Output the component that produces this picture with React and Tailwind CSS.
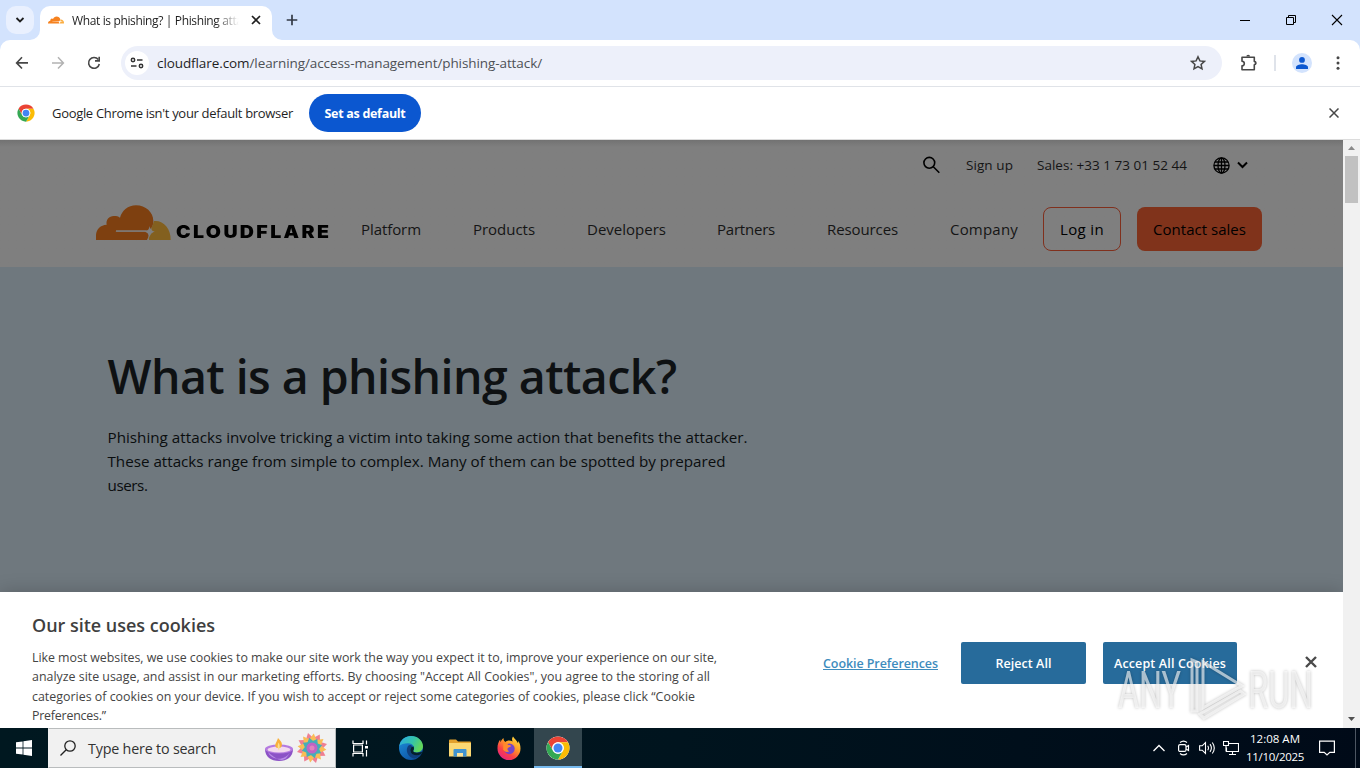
import { useLayoutEffect, useRef, useState } from "react";

/* One line of text, tracked so that it spans exactly `w` pixels. */
function Line({ w, className = "", children }) {
  const ref = useRef(null);
  const [spacing, setSpacing] = useState(0);
  useLayoutEffect(() => {
    const box = ref.current.parentElement;
    const scale = box.getBoundingClientRect().width / box.offsetWidth || 1;
    const natural = ref.current.getBoundingClientRect().width / scale;
    const count = ref.current.textContent.length;
    setSpacing((box.offsetWidth - natural) / count);
  }, [w]);
  return (
    <span className={`block shrink-0 whitespace-nowrap ${className}`} style={{ width: w }}>
      <span ref={ref} style={{ letterSpacing: spacing }}>
        {children}
      </span>
    </span>
  );
}

function Favicon() {
  return (
    <svg className="h-4 w-4 shrink-0" viewBox="0 0 24 24">
      <path
        fill="#f6821f"
        d="M16.509 16.845c.147-.507.09-.971-.156-1.316-.224-.316-.604-.499-1.061-.52l-8.66-.113a.156.156 0 0 1-.133-.071.19.19 0 0 1-.021-.156c.028-.084.112-.148.204-.156l8.736-.112c1.035-.049 2.16-.887 2.553-1.914l.5-1.301a.32.32 0 0 0 .014-.168c-.562-2.546-2.835-4.445-5.55-4.445-2.504 0-4.628 1.617-5.387 3.861a2.53 2.53 0 0 0-1.794-.499 2.55 2.55 0 0 0-2.286 2.286c-.028.31-.007.613.063.894C1.568 13.171 0 14.775 0 16.752c0 .175.014.352.035.527.014.083.085.148.169.148h15.981a.22.22 0 0 0 .204-.156z"
      />
      <path
        fill="#fbad41"
        d="M19.266 11.281c-.077 0-.161 0-.239.011-.056 0-.105.042-.127.098l-.337 1.174c-.148.507-.092.971.154 1.317.225.316.605.498 1.062.519l1.844.114c.056 0 .105.026.133.07a.2.2 0 0 1 .021.156.23.23 0 0 1-.204.156l-1.921.112c-1.041.049-2.158.887-2.553 1.914l-.14.359c-.029.071.021.141.098.141h6.598a.17.17 0 0 0 .169-.126c.112-.408.176-.837.176-1.28 0-2.603-2.125-4.727-4.734-4.727"
      />
    </svg>
  );
}

function ChromeLogo({ className }) {
  return (
    <svg className={`shrink-0 ${className}`} viewBox="0 0 48 48">
      <circle cx="24" cy="24" r="23" fill="#fff" />
      <path d="M4.1 12.5A23 23 0 0 1 43.9 12.5H24a11.5 11.5 0 0 0-10 17.2z" fill="#ea4335" />
      <path d="M43.9 12.5A23 23 0 0 1 24 47l10-17.3a11.5 11.5 0 0 0-10-17.2z" fill="#fbbc05" />
      <path d="M24 47A23 23 0 0 1 4.1 12.5l9.9 17.2a11.5 11.5 0 0 0 20 0z" fill="#34a853" />
      <circle cx="24" cy="24" r="11.5" fill="#fff" />
      <circle cx="24" cy="24" r="9" fill="#4285f4" />
    </svg>
  );
}

function TabStrip() {
  return (
    <div className="flex h-10 items-start bg-[#d3e3fd] pl-1.5 pt-1.5 text-[#1f1f1f]">
      <div className="flex h-7 w-7 items-center justify-center rounded-[10px] bg-[#e9f0fe]">
        <svg className="h-2 w-2.5" viewBox="0 0 10 8" fill="none" stroke="#1f1f1f" strokeWidth="1.8">
          <path d="M1.5 2 5 5.5 8.5 2" />
        </svg>
      </div>
      <svg className="-ml-1 mt-[24px] h-2.5 w-2.5" viewBox="0 0 10 10">
        <path d="M10 0v10H0A10 10 0 0 0 10 0" fill="#fff" />
      </svg>
      <div className="flex h-[34px] w-[232px] items-start rounded-t-[10px] bg-white pl-2">
        <div className="mt-1.5">
          <Favicon />
        </div>
        <div className="ml-2 mt-[5px] w-[167px] overflow-hidden bg-linear-to-r from-[#1f1f1f] from-86% to-transparent bg-clip-text text-xs leading-5 text-transparent">
          <Line w={182}>What is phishing? | Phishing attack</Line>
        </div>
        <svg className="ml-[12px] mt-[9px] h-2.5 w-2.5" viewBox="0 0 10 10" stroke="#1f1f1f" strokeWidth="1.7">
          <path d="m1 1 8 8M9 1 1 9" />
        </svg>
      </div>
      <svg className="mt-[24px] h-2.5 w-2.5" viewBox="0 0 10 10">
        <path d="M0 0v10h10A10 10 0 0 1 0 0" fill="#fff" />
      </svg>
      <svg className="ml-1 mt-2 h-3 w-3" viewBox="0 0 12 12" stroke="#333a45" strokeWidth="1.7">
        <path d="M6 .7v10.6M.7 6h10.6" />
      </svg>
      <div className="ml-auto mr-[17px] mt-2 flex items-center gap-[34px]">
        <svg className="h-3 w-3" viewBox="0 0 12 12" stroke="#000" strokeWidth="1">
          <path d="M1 6.500h10" />
        </svg>
        <svg className="h-3 w-3" viewBox="0 0 12 12" fill="none" stroke="#000" strokeWidth="1">
          <path d="M1.500 3.500h7v7h-7zM3.500 3.500v-2h7v7h-2" />
        </svg>
        <svg className="h-3 w-3" viewBox="0 0 12 12" stroke="#000" strokeWidth="1.100">
          <path d="m1 1 10 10M11 1 1 11" />
        </svg>
      </div>
    </div>
  );
}

function Toolbar() {
  return (
    <div className="bg-[#d3e3fd]">
      <div className="flex h-[47px] items-center rounded-t-[10px] border-b border-[#e0e3e8] bg-white pl-[15px]">
        <svg className="h-3.5 w-3.5" viewBox="0 0 14 14" fill="none" stroke="#474747" strokeWidth="1.6">
          <path d="M7 1.300 1.600 6.900 7 12.500M1.800 6.900H13" />
        </svg>
        <svg className="ml-[22px] h-3.5 w-3.5" viewBox="0 0 14 14" fill="none" stroke="#b2b2b2" strokeWidth="1.500">
          <path d="m7 1.300 5.400 5.600L7 12.500M12.200 6.900H1" />
        </svg>
        <svg className="ml-[22px] h-3.5 w-3.5" viewBox="0 0 14 14" fill="none" stroke="#474747" strokeWidth="1.600">
          <path d="M11.300 3.600A5.400 5.400 0 1 0 12.300 8" />
          <path d="M12.200.8v4.100H8" />
        </svg>
        <div className="ml-5 flex h-[34px] w-[1101px] items-center rounded-full bg-[#edf0fa] pl-1">
          <span className="flex h-6 w-6 items-center justify-center rounded-full bg-white">
            <svg className="h-3 w-3.5" viewBox="0 0 14 12" fill="none" stroke="#333" strokeWidth="1.500">
              <circle cx="3" cy="3" r="1.700" />
              <path d="M7 3h5.500M1 9h5.500" />
              <circle cx="11" cy="9" r="1.700" />
            </svg>
          </span>
          <div className="ml-2 text-[13.500px] leading-5 text-[#4d5156]">
            <Line w={385}>
              <span className="text-[#1f1f1f]">cloudflare.com</span>/learning/access-management/phishing-attack/
            </Line>
          </div>
          <svg className="ml-auto mr-4 h-4 w-4" viewBox="0 0 16 16" fill="none" stroke="#474747" strokeWidth="1.500">
            <path d="m8 1.800 1.900 4.100 4.500.5-3.300 3 .9 4.500L8 11.700l-4 2.200.9-4.500-3.300-3 4.500-.5z" />
          </svg>
        </div>
        <svg className="ml-[18px] h-[18px] w-[18px]" viewBox="0 0 18 18" fill="none" stroke="#474747" strokeWidth="1.600" strokeLinejoin="round">
          <path d="M2 3.200h12.300v4.300a1.500 1.500 0 0 1 0 3.200v5.100H2v-4a2.300 2.300 0 0 0 0-4.600z" />
          <path d="M6.300 2.600a1.900 1.900 0 0 1 3.800 0zM14.800 7.300a1.900 1.900 0 0 1 0 3.700z" fill="#474747" stroke="none" />
        </svg>
        <span className="ml-[16px] h-4 w-0.5 bg-[#dfe3ea]" />
        <span className="ml-4 flex h-5 w-5 items-center justify-center rounded-full bg-[#d3e3fd]">
          <svg className="h-3 w-3" viewBox="0 0 12 12" fill="#0b57d0">
            <circle cx="6" cy="2.900" r="2.900" />
            <path d="M0 12v-1.800C0 8.300 3.500 7.200 6 7.200s6 1.100 6 3V12z" />
          </svg>
        </span>
        <svg className="ml-[24px] h-4 w-1" viewBox="0 0 4 16" fill="#474747">
          <circle cx="2" cy="2.700" r="1.500" />
          <circle cx="2" cy="8" r="1.500" />
          <circle cx="2" cy="13.300" r="1.500" />
        </svg>
      </div>
    </div>
  );
}

function InfoBar() {
  return (
    <div className="flex h-[53px] items-center border-b border-[#dcdcdc] bg-white pl-[17px] pr-[21px] text-[#1f1f1f]">
      <ChromeLogo className="h-[18px] w-[18px]" />
      <Line w={241} className="ml-[17px] pt-px text-[13px]">
        Google Chrome isn't your default browser
      </Line>
      <div className="ml-4 flex h-[38px] w-28 items-center justify-center rounded-full bg-[#0b57d0] pt-0.5 text-[12.500px] font-bold text-white">
        <Line w={81}>Set as default</Line>
      </div>
      <svg className="ml-auto h-2.5 w-2.5" viewBox="0 0 10 10" stroke="#474747" strokeWidth="1.500">
        <path d="m.5.5 9 9M9.500.5l-9 9" />
      </svg>
    </div>
  );
}

function CloudflareLogo() {
  return (
    <div className="flex w-[233px] shrink-0 items-end">
      <svg className="h-[35px] w-[75px] shrink-0" viewBox="48 43 225 105">
        <path
          d="M48 148v-15c1-18 14-30 32-31-3-15 8-27 23-26 7 0 11 1 17 5 6-21 24-37 48-37 29 0 52 21 52 47 0 17-8 29-23 29H110c-4 0-4 3 0 3h85c9 0 13 9 9 18l-3 7z"
          fill="#7e4010"
        />
        <path d="M108 119h92v3.500h-92z" fill="#7f7f7f" />
        <path d="M207 148c-2-12 4-21 15-25-8-3-10-10-5-17l5-15c28-3 51 22 50 57z" fill="#83601f" />
        <path d="M209 106c2 11 5 15 16 17-11 2-14 7-16 18-2-11-6-16-16-18 10-2 14-6 16-17z" fill="#7f7f7f" />
      </svg>
      <Line w={135} className="mb-[-2px] ml-[4.500px] origin-left scale-x-[1.15] font-[Inter,sans-serif] text-[17px] font-black leading-5 text-black">
        CLOUDFLARE
      </Line>
    </div>
  );
}

function SiteHeader() {
  return (
    <header className="h-[127px] bg-[#7f7f7f] bg-linear-to-b from-[#727272] to-[#7f7f7f] to-[7px] text-[#151515]">
      <div className="flex h-[50px] items-center justify-end pr-[95px] text-[13.500px]">
        <svg className="h-[18px] w-[18px]" viewBox="0 0 18 18" fill="none" stroke="#000" strokeWidth="1.600">
          <circle cx="7.300" cy="6.800" r="5.400" />
          <path d="m11.300 10.800 6 6" />
        </svg>
        <Line w={47} className="ml-[26px]">Sign up</Line>
        <Line w={150} className="ml-6">Sales: +33 1 73 01 52 44</Line>
        <svg className="ml-[26px] h-[17px] w-[17px]" viewBox="0 0 17 17" fill="none" stroke="#000" strokeWidth="1.300">
          <circle cx="8.500" cy="8.500" r="7.600" />
          <ellipse cx="8.500" cy="8.500" rx="3.500" ry="7.600" />
          <path d="M8.500 1v15M1 8.500h15M2 5h13M2 12h13" />
        </svg>
        <svg className="ml-[7px] h-2 w-[11px]" viewBox="0 0 11 8" fill="none" stroke="#000" strokeWidth="2">
          <path d="m1 1.500 4.500 4.500L10 1.500" />
        </svg>
      </div>
      <nav className="flex h-[78px] items-center pl-24 text-[15px]">
        <div className="pb-[14px]">
          <CloudflareLogo />
        </div>
        <Line w={60} className="ml-[32px]">Platform</Line>
        <Line w={62} className="ml-[52px]">Products</Line>
        <Line w={79} className="ml-[52px]">Developers</Line>
        <Line w={58} className="ml-[51px]">Partners</Line>
        <Line w={71} className="ml-[52px]">Resources</Line>
        <Line w={68} className="ml-[52px]">Company</Line>
        <div className="ml-[25px] flex h-11 w-[78px] items-center justify-center rounded-lg border border-[#80301d] text-black">
          <Line w={44}>Log in</Line>
        </div>
        <div className="ml-4 flex h-11 w-[125px] items-center justify-center rounded-lg bg-[#80331b] text-black">
          <Line w={93}>Contact sales</Line>
        </div>
      </nav>
    </header>
  );
}

function Hero() {
  return (
    <section className="h-[325px] bg-[#6f787e] pl-[107.500px] pt-[77px] text-[#0e1113]">
      <h1 className="text-[46.500px] font-semibold leading-[64px]">
        <Line w={569}>What is a phishing attack?</Line>
      </h1>
      <div className="mt-[17px] text-[15.200px] leading-6 text-[#0a0d0e]">
        <Line w={640}>Phishing attacks involve tricking a victim into taking some action that benefits the attacker.</Line>
        <Line w={618}>These attacks range from simple to complex. Many of them can be spotted by prepared</Line>
        <Line w={40}>users.</Line>
      </div>
    </section>
  );
}

function CookieBanner() {
  return (
    <section className="flex h-[136px] items-start bg-white pl-8 text-[#444] shadow-[0_0_18px_rgba(0,0,0,0.2)]">
      <div className="w-[791px]">
        <h2 className="mt-[21px] text-[18px] font-semibold leading-6 text-[#3f3f3f]">
          <Line w={183}>Our site uses cookies</Line>
        </h2>
        <div className="mt-[10.500px] text-[12.400px] leading-[19.500px]">
          <Line w={685}>Like most websites, we use cookies to make our site work the way you expect it to, improve your experience on our site,</Line>
          <Line w={678}>analyze site usage, and assist in our marketing efforts. By choosing "Accept All Cookies", you agree to the storing of all</Line>
          <Line w={663}>categories of cookies on your device. If you wish to accept or reject some categories of cookies, please click “Cookie</Line>
          <Line w={74}>Preferences.”</Line>
        </div>
      </div>
      <div className="mt-[50px] flex h-[42px] items-center text-[12.500px] font-semibold text-white">
        <Line w={115} className="pt-0.5 text-[#3e8cbd] underline">Cookie Preferences</Line>
        <div className="ml-[23px] flex h-[42px] w-[125px] items-center justify-center rounded-xs bg-[#276b9b] pt-0.5">
          <Line w={56}>Reject All</Line>
        </div>
        <div className="ml-[17px] flex h-[42px] w-[134px] items-center justify-center rounded-xs bg-[#276b9b] pt-0.5">
          <Line w={112}>Accept All Cookies</Line>
        </div>
        <svg className="mb-[3px] ml-[68px] h-3 w-3" viewBox="0 0 12 12" stroke="#4a4a4a" strokeWidth="2.400">
          <path d="m1 1 10 10M11 1 1 11" />
        </svg>
      </div>
    </section>
  );
}

function Scrollbar() {
  return (
    <div className="flex w-[17px] flex-col items-center bg-[#f1f1f1]">
      <svg className="h-4 w-[17px]" viewBox="0 0 17 16" fill="#8a8a8a">
        <path d="M5 10h7L8.500 6z" />
      </svg>
      <div className="h-[47px] w-[13px] bg-[#c1c1c1]" />
      <svg className="mt-auto h-[17px] w-[17px]" viewBox="0 0 17 17" fill="#505050">
        <path d="M5 6h7l-3.500 4z" />
      </svg>
    </div>
  );
}

function Watermark() {
  return (
    <svg className="absolute left-[1112px] top-[654px] h-[70px] w-[206px] overflow-visible drop-shadow-[0_0_1.500px_rgba(0,0,0,0.4)]" viewBox="0 0 206 70">
      <g fill="#fff" fillOpacity="0.62" fontFamily="Roboto, sans-serif" fontSize="51" fontWeight="400">
        <text x="6" y="54" textLength="63" lengthAdjust="spacingAndGlyphs">ANY</text>
        <text x="136" y="54" textLength="65" lengthAdjust="spacingAndGlyphs">RUN</text>
      </g>
      <g fill="none" stroke="#fff" strokeOpacity="0.62" strokeWidth="3">
        <path d="M80 6v51h5V8z" />
        <path d="M91 8v46l39-22z" />
        <path d="m88 60 40-23 4 3-40 24z" />
      </g>
    </svg>
  );
}

function Diya() {
  return (
    <svg className="h-7 w-[30px]" viewBox="0 0 30 28">
      <path d="M1 15c0 8 6 12 14 12s14-4 14-12z" fill="#8c52c6" />
      <path d="M4 18c3 9 18 9 22 0-4 9-9 12-22 0z" fill="#b98be6" />
      <ellipse cx="15" cy="15" rx="14" ry="4.500" fill="#b57be0" />
      <ellipse cx="15" cy="15.500" rx="11.500" ry="3" fill="#f3d9ee" />
      <path d="M14 4c4 4 4.500 6 3.500 8.500-1 2-5 2-6 0-1-2 1.500-5 2.500-8.500z" fill="#f9b03c" />
      <path d="M14.500 8.500c2 3 1 6 .5 8-1.500-2-2-4-.5-8z" fill="#fbe08a" />
    </svg>
  );
}

const PETALS = [0, 45, 90, 135, 180, 225, 270, 315];

function Rangoli() {
  return (
    <svg className="h-8 w-8" viewBox="-16 -16 32 32">
      {PETALS.map((a) => (
        <path key={`o${a}`} d="M0-15.500 3.500-10 0-6-3.500-10z" fill="#ef7f92" transform={`rotate(${a - 15})`} />
      ))}
      {PETALS.map((a) => (
        <path key={`m${a}`} d="M0-14.500 5-6 0-3-5-6z" fill="#f9bd55" transform={`rotate(${a + 7})`} />
      ))}
      {PETALS.map((a) => (
        <path key={`i${a}`} d="M0-10.500 4-5 0 0-4-5z" fill="#45aeb8" transform={`rotate(${a - 15})`} />
      ))}
      <circle r="5.500" fill="#c064c4" />
      <circle r="2.500" fill="#e283bd" />
    </svg>
  );
}

function Edge() {
  return (
    <svg className="h-6 w-6" viewBox="0 0 24 24">
      <defs>
        <linearGradient id="edgeTop" x1="0" y1="0" x2="1" y2="0.400">
          <stop offset="0" stopColor="#2aa9e8" />
          <stop offset="0.600" stopColor="#35c4a9" />
          <stop offset="1" stopColor="#62d65a" />
        </linearGradient>
        <linearGradient id="edgeLow" x1="0" y1="0" x2="0.700" y2="1">
          <stop offset="0" stopColor="#1f93df" />
          <stop offset="1" stopColor="#0c4f9f" />
        </linearGradient>
      </defs>
      <circle cx="12" cy="12" r="12" fill="url(#edgeLow)" />
      <path d="M9 10c-3 5 0 11 6 12.600 3-.6 6-2.600 7.300-5.400-4 3-11 2-11-3.200 0-2 1-3 2-3.500C12.500 9 10.500 8.500 9 10z" fill="#103f7c" />
      <path d="M.3 10C1.500 3.500 6.500 0 12 0c7 0 12 5 12 10.300 0 4-3 6.200-6.200 6.200-2.400 0-4-.8-3.600-1.700 2.300-2.600.3-7.600-5.200-7.600C5 7.200 1.500 8.500.3 10z" fill="url(#edgeTop)" />
      <path d="M14.200 14.800c.8-1 1.100-2.700.3-4.300-2.500-.1-4 3-2.600 5.900 1.600 3 6 3.700 10.400 1.500l1-2.300c-2.500 1.400-9 2-9.100-.8z" fill="#06202c" />
    </svg>
  );
}

function Explorer() {
  return (
    <svg className="h-[18px] w-[22px]" viewBox="0 0 22 18">
      <path d="M0 1.500Q0 .5 1 .5h6l2 2h12q1 0 1 1V17H0z" fill="#e2a12c" />
      <path d="M0 4h22v13.500H0z" fill="#fbd873" />
      <path d="M4.500 17.500V11q0-1 1-1h11q1 0 1 1v6.500h-3.500V14H8v3.500z" fill="#3f93d1" />
      <path d="M8 14h6v3.500H8z" fill="#fbe49c" />
    </svg>
  );
}

function Firefox() {
  return (
    <svg className="h-6 w-6" viewBox="0 0 24 24">
      <defs>
        <linearGradient id="foxBody" x1="0.900" y1="0" x2="0.200" y2="1">
          <stop offset="0" stopColor="#ffe541" />
          <stop offset="0.400" stopColor="#ff9a28" />
          <stop offset="0.700" stopColor="#fb4046" />
          <stop offset="1" stopColor="#e3208a" />
        </linearGradient>
      </defs>
      <path
        d="M16 .5c-1.500 2-1 4-.3 5C13 4 10 4.200 8.500 6 7 5.500 6.400 3.500 6.500 2 5 3 4 4.800 3.800 6.200 3.300 5.500 3.200 4.500 3.300 3.500 1.300 6 .4 9 .5 12.500a11.500 11.500 0 0 0 23 0c0-3.500-1-6-2.500-7.500.2 1 .2 1.500 0 2.300C20 4.500 17.500 3 16 .5z"
        fill="url(#foxBody)"
      />
      <circle cx="12.300" cy="12.800" r="5.400" fill="#7545c9" />
      <path d="M6.300 7.500c2-.6 4 0 5 1.500 1.500 0 2.500.3 2.700 1-.5 1.300-2.500 1.200-3.300 2.200-.6 1 0 2.500 1.500 3-2.500 1.500-5 .3-6-1.500z" fill="#ff8a2c" />
    </svg>
  );
}

function Taskbar() {
  return (
    <footer className="flex h-10 items-center bg-linear-to-r from-[#001820] via-[#00141e] to-[#000a18] text-white">
      <svg className="ml-4 h-4 w-4" viewBox="0 0 16 16" fill="#fff">
        <path d="M0 2.300 6.600 1.400v6.200H0zM7.400 1.300 16 0v7.600H7.400zM0 8.400h6.600v6.200L0 13.700zM7.400 8.400H16V16l-8.600-1.300z" />
      </svg>
      <div className="ml-4 flex h-10 w-[288px] items-center border border-[#b9bcbd] border-l-transparent bg-[#f1f1f1] pl-[11px] text-[#333]">
        <svg className="h-4 w-4" viewBox="0 0 16 16" fill="none" stroke="#222" strokeWidth="1.300">
          <circle cx="10" cy="6" r="5.200" />
          <path d="M6.200 9.700.5 15.500" />
        </svg>
        <Line w={128} className="ml-3 pt-px text-[14.300px]">Type here to search</Line>
        <div className="ml-12 flex items-center gap-0.5">
          <Diya />
          <Rangoli />
        </div>
      </div>
      <svg className="ml-4 h-[17px] w-[17px]" viewBox="0 0 17 17" fill="none" stroke="#fff" strokeWidth="1.200">
        <path d="M1 .5v3h10v-3M1 16.500v-3h10v3M1.600 5h8.800v7H1.600zM14.500.5v4M14.500 10v6.500" />
        <path d="M13 6h3v2.500h-3z" fill="#fff" stroke="none" />
      </svg>
      <div className="ml-[30px]">
        <Edge />
      </div>
      <div className="ml-[26px]">
        <Explorer />
      </div>
      <div className="ml-[26px]">
        <Firefox />
      </div>
      <div className="ml-[13px] flex h-10 w-12 items-center justify-center border-b-2 border-[#76b9ed] bg-[#33464e] pt-0.5">
        <ChromeLogo className="h-6 w-6" />
      </div>
      <div className="ml-auto flex items-center">
        <svg className="h-2 w-3" viewBox="0 0 12 8" fill="none" stroke="#fff" strokeWidth="1.300">
          <path d="m.5 7 5.500-5.500L11.500 7" />
        </svg>
        <svg className="ml-3 h-4 w-3.5" viewBox="0 0 14 16" fill="none" stroke="#fff" strokeWidth="1.200">
          <path d="M3 2.500Q6.500-.3 10 2.500M3 13.500q3.500 2.800 7 0" />
          <rect x="1.600" y="4.600" width="7.400" height="6.800" rx="1.500" />
          <path d="M9 7l2.500-1.500v5L9 9" />
        </svg>
        <svg className="ml-2 h-4 w-[17px]" viewBox="0 0 17 16" fill="none" stroke="#fff" strokeWidth="1.100">
          <path d="M.6 5.800h2.600L6.500 2.500v11l-3.300-3.300H.6zM8.700 5.800q1.600 2.200 0 4.400M11 4.200q2.800 3.800 0 7.600M13.300 2.500q4 5.500 0 11" />
        </svg>
        <svg className="ml-[7px] h-4 w-4" viewBox="0 0 16 16" fill="none" stroke="#fff" strokeWidth="1.100">
          <path d="M5.500 3.500h10v8H3.500V7.500M9.500 11.500V14M6 14.500h7M.5 1.500h5v4h-5zM3 5.500v6" />
        </svg>
        <div className="ml-[7px] flex w-[58px] flex-col items-center text-[11.500px] leading-[18px]">
          <Line w={50}>12:08 AM</Line>
          <Line w={58}>11/10/2025</Line>
        </div>
        <svg className="ml-[15px] h-4 w-4" viewBox="0 0 16 16" fill="none" stroke="#fff" strokeWidth="1.200">
          <path d="M.6 1.100h14.800v11.300h-4.600L8 15l-2.800-2.600H.6z" />
        </svg>
        <span className="ml-5 mr-1 h-10 w-px bg-[#4d5662]" />
      </div>
    </footer>
  );
}

export default function App() {
  return (
    <div className="relative h-[768px] w-[1360px] overflow-hidden bg-white font-['Open_Sans','Noto_Sans',sans-serif]">
      <TabStrip />
      <Toolbar />
      <InfoBar />
      <div className="flex h-[588px]">
        <main className="w-[1343px] overflow-hidden">
          <SiteHeader />
          <Hero />
          <CookieBanner />
        </main>
        <Scrollbar />
      </div>
      <Taskbar />
      <Watermark />
    </div>
  );
}
